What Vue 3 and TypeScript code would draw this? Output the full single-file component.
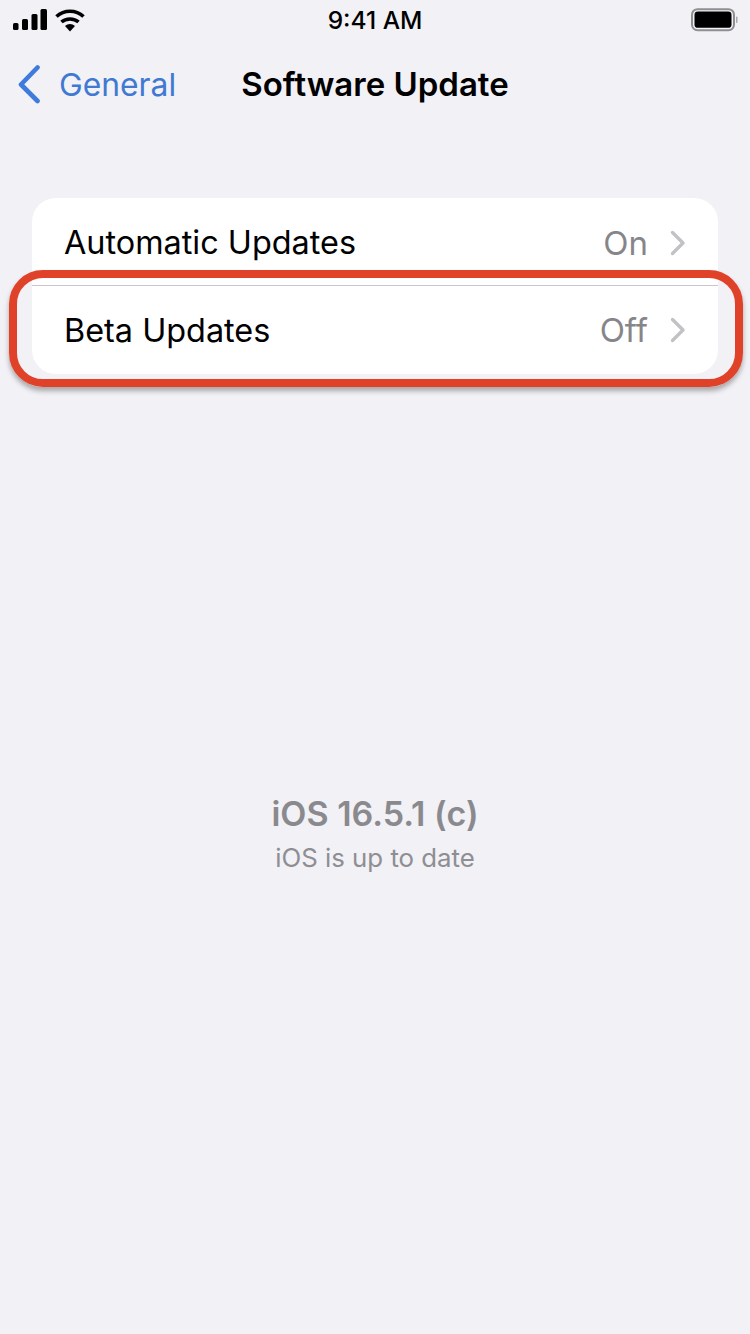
<script setup lang="ts">
interface Row { label: string; value: string }
const rows: Row[] = [
  { label: 'Automatic Updates', value: 'On' },
  { label: 'Beta Updates', value: 'Off' },
]
</script>

<template>
  <div class="page">
    <div class="status">
      <div class="status-left">
        <svg width="34" height="22" viewBox="0 0 34 22">
          <rect x="0" y="14" width="5.500" height="7" rx="1.500" fill="#000" />
          <rect x="9" y="10" width="6" height="11" rx="1.500" fill="#000" />
          <rect x="18.500" y="5" width="6" height="16" rx="1.500" fill="#000" />
          <rect x="27.500" y="0" width="6.500" height="21" rx="1.500" fill="#000" />
        </svg>
        <svg class="wifi" width="30" height="23" viewBox="0 0 30 23">
          <path d="M1.500 7.500C9 .5 21 .5 28.500 7.500" fill="none" stroke="#000" stroke-width="3.600" />
          <path d="M6.500 13C11 8.900 19 8.900 23.500 13" fill="none" stroke="#000" stroke-width="3.600" />
          <path d="M10 17C12.800 14.200 17.200 14.200 20 17L15 22.500Z" fill="#000" />
        </svg>
      </div>
      <div class="time">9:41 AM</div>
      <div class="status-right">
        <svg width="48" height="24" viewBox="0 0 48 24">
          <rect x="1" y="1.200" width="42" height="21" rx="5.500" fill="none" stroke="#8e8e93" stroke-width="2" />
          <rect x="3.500" y="3.600" width="37" height="16.200" rx="3.400" fill="#000" />
          <rect x="45" y="8.500" width="1.500" height="6.500" rx="0.700" fill="#a8a8ad" />
        </svg>
      </div>
    </div>

    <div class="nav">
      <div class="back">
        <svg width="26" height="40" viewBox="0 0 26 40">
          <path d="M21.500 3.500L5 20.500L21.500 37" fill="none" stroke="#3f7bdc" stroke-width="4.600" stroke-linecap="round" stroke-linejoin="round" />
        </svg>
        <span>General</span>
      </div>
      <div class="title">Software Update</div>
      <div></div>
    </div>

    <div class="card-wrap">
      <div class="card">
        <div v-for="(row, i) in rows" :key="row.label" class="row" :class="{ divided: i === 0 }">
          <span class="label">{{ row.label }}</span>
          <span class="value">{{ row.value }}</span>
          <svg class="chev" width="16" height="26" viewBox="0 0 16 26">
            <path d="M2.500 2.500L13 13L2.500 23.500" fill="none" stroke="#c2c2c6" stroke-width="3.400" stroke-linecap="round" stroke-linejoin="round" />
          </svg>
        </div>
      </div>
      <div class="highlight"></div>
    </div>

    <div class="version">
      <div class="ios">iOS 16.5.1 (c)</div>
      <div class="uptodate">iOS is up to date</div>
    </div>
  </div>
</template>

<style>
html, body { margin: 0; background: #f1f1f6; }
</style>

<style scoped>
.page {
  width: 750px;
  height: 1334px;
  background: #f1f1f6;
  font-family: Inter, "Liberation Sans", sans-serif;
  display: flex;
  flex-direction: column;
  overflow: hidden;
}
.status {
  height: 42px;
  padding: 0 13px;
  display: grid;
  grid-template-columns: 1fr auto 1fr;
  align-items: start;
}
.status-left { display: flex; gap: 8px; padding-top: 9px; }
.wifi { display: block; }
.time {
  font-size: 24.500px;
  font-weight: 500;
  line-height: 28px;
  padding-top: 6px;
  color: #000;
}
.status-right { display: flex; justify-content: flex-end; padding-top: 8px; margin-right: -2px; }
.nav {
  height: 84px;
  padding: 0 16px;
  display: grid;
  grid-template-columns: 1fr auto 1fr;
  align-items: center;
}
.back { display: flex; align-items: center; gap: 17px; color: #4079d2; font-size: 31.800px; }
.title { font-size: 33px; font-weight: 600; color: #000; }
.card-wrap {
  position: relative;
  margin: 72px 32px 0;
}
.card { background: #fff; border-radius: 24px; overflow: hidden; }
.row {
  height: 88px;
  box-sizing: border-box;
  display: flex;
  align-items: center;
  padding: 0 32px 0 33px;
  font-size: 32.400px;
}
.row.divided { border-bottom: 1px solid #c8c8ca; padding-top: 2px; }
.label { flex: 1; color: #000; margin-left: -1px; }
.value { color: #86868a; margin-right: 22px; font-size: 33px; }
.chev { display: block; }
.highlight {
  position: absolute;
  left: -23px;
  right: -25px;
  top: 72px;
  height: 117px;
  box-sizing: border-box;
  border: 8px solid #e04229;
  border-radius: 34px;
  box-shadow: 0 4px 5px rgba(60, 60, 60, 0.4);
}
.version {
  margin-top: 418px;
  text-align: center;
}
.ios { font-size: 34px; font-weight: 600; color: #8a8a8e; line-height: 44px; }
.uptodate { font-size: 25.800px; color: #8e8e93; line-height: 44px; }
</style>
